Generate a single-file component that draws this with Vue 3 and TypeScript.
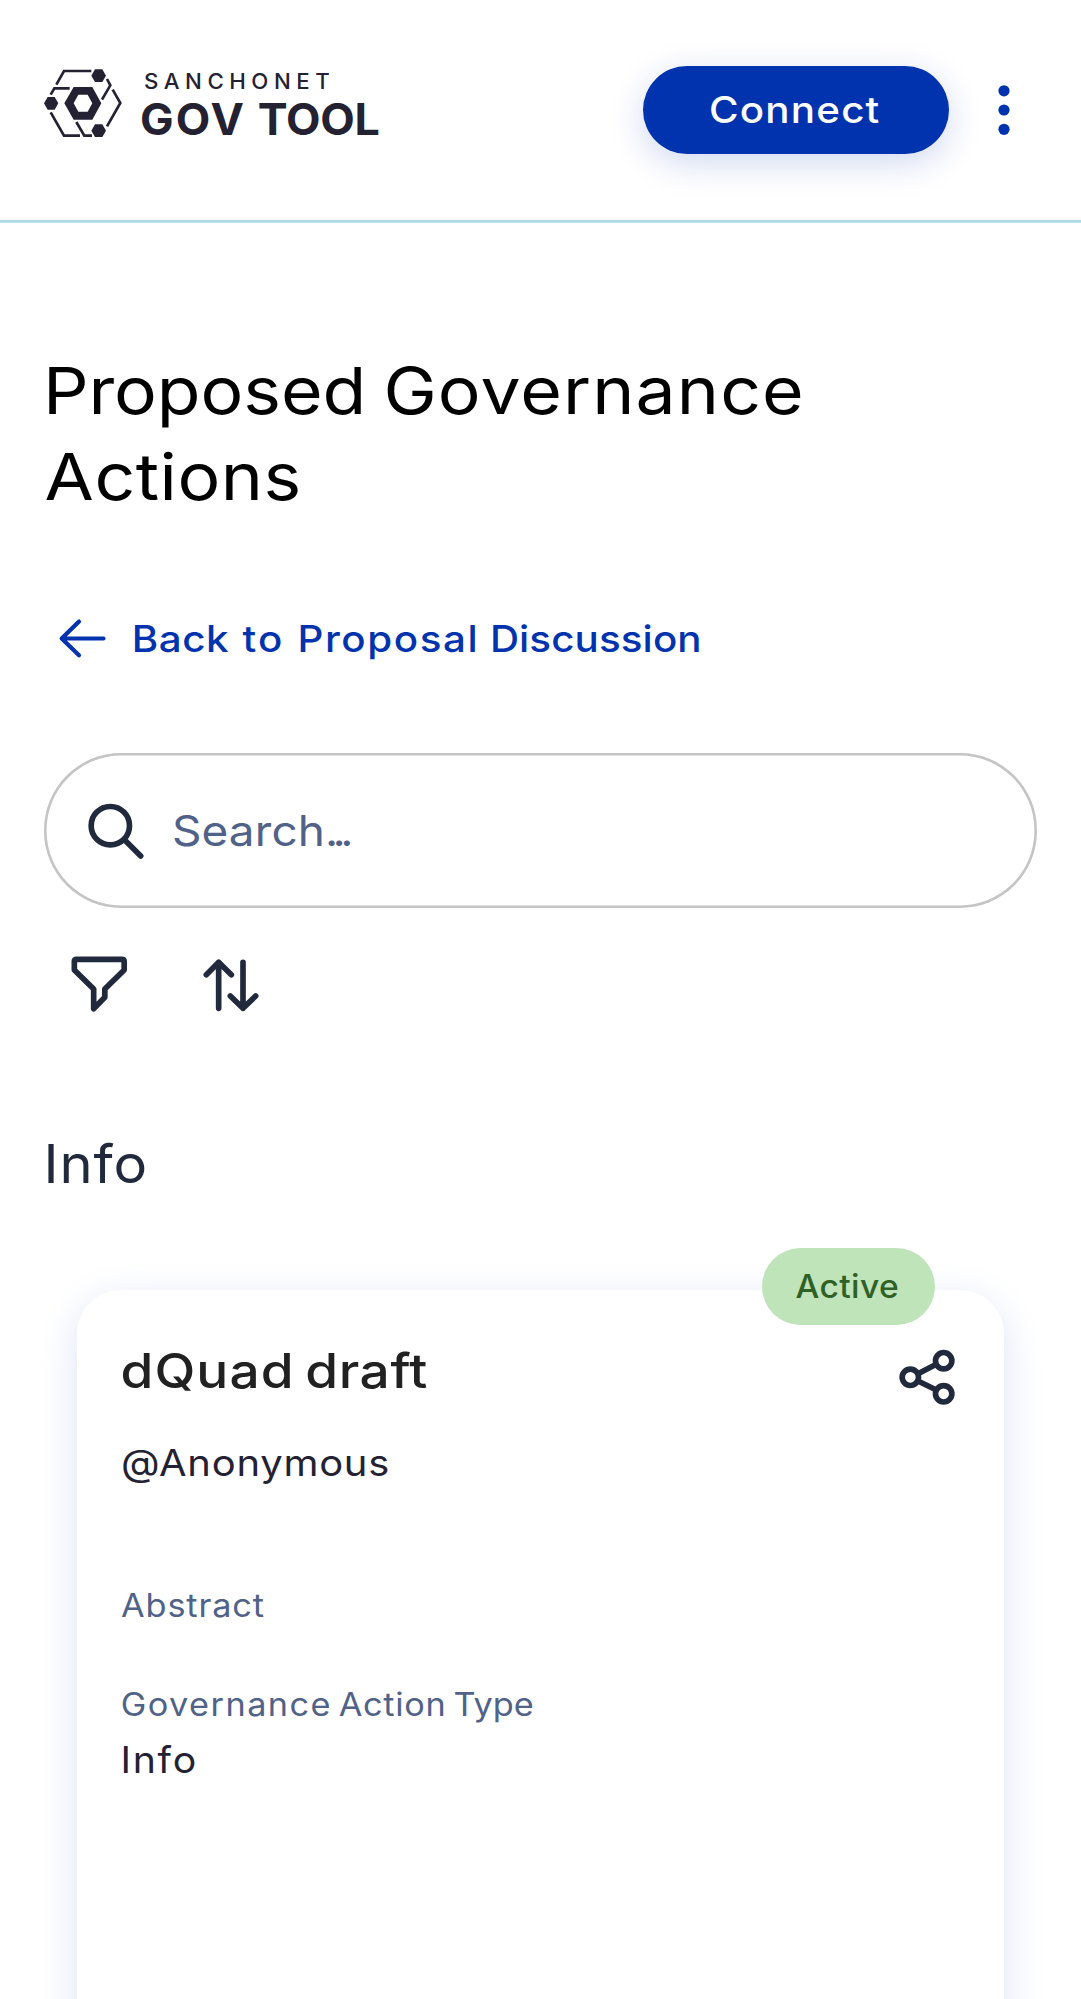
<script setup lang="ts">
import { h, type FunctionalComponent } from 'vue'

interface Word {
  text: string
  track: number
  gap?: number
}

// A line of words, each with its own tracking and leading gap in pixels;
// `wide` stretches the letterforms horizontally.
const Words: FunctionalComponent<{ words: Word[]; wide: number }> = (props) =>
  h(
    'span',
    {
      style: {
        display: 'inline-block',
        whiteSpace: 'nowrap',
        transformOrigin: '0 50%',
        transform: `scaleX(${props.wide})`,
      },
    },
    props.words.map((w) =>
      h('span', { style: { letterSpacing: `${w.track}px`, marginLeft: `${w.gap ?? 0}px` } }, w.text),
    ),
  )
Words.props = ['words', 'wide']

const brandTop: Word[] = [{ text: 'SANCHONET', track: 5.2 }]
const brandMain: Word[] = [
  { text: 'GOV', track: 2 },
  { text: 'TOOL', track: -0.3, gap: 11.5 },
]
const connect: Word[] = [{ text: 'Connect', track: 1.1 }]
const headingFirst: Word[] = [
  { text: 'Proposed', track: -0.1, gap: -1 },
  { text: 'Governance', track: 1, gap: 15.7 },
]
const headingSecond: Word[] = [{ text: 'Actions', track: 0.45, gap: 0.5 }]
const back: Word[] = [
  { text: 'Back', track: 0.5, gap: -1.2 },
  { text: 'to', track: 1.8, gap: 12.4 },
  { text: 'Proposal', track: 1.45, gap: 12.1 },
  { text: 'Discussion', track: 0.1, gap: 9.8 },
]
const search: Word[] = [
  { text: 'Search', track: 0.1 },
  { text: '...', track: -5.2 },
]
const section: Word[] = [{ text: 'Info', track: 0.8, gap: -0.5 }]

const card = {
  status: [{ text: 'Active', track: 0.4, gap: -0.5 }] as Word[],
  title: [
    { text: 'dQuad', track: 0.95, gap: -0.5 },
    { text: 'draft', track: 0.5, gap: 9.5 },
  ] as Word[],
  author: [{ text: '@Anonymous', track: 0.7 }] as Word[],
  abstractLabel: [{ text: 'Abstract', track: 0.84 }] as Word[],
  typeLabel: [
    { text: 'Governance', track: 1.38, gap: -0.3 },
    { text: 'Action', track: 0.67, gap: 6.2 },
    { text: 'Type', track: 0, gap: 6.7 },
  ] as Word[],
  type: [{ text: 'Info', track: 1.6, gap: -0.5 }] as Word[],
}
</script>

<template>
  <div class="page">
    <header class="header">
      <div class="brand">
        <svg class="mark" viewBox="42 54 236 210" aria-hidden="true">
          <g fill="none" stroke="#242232" stroke-width="8">
            <path d="M79 104 102 63H184" />
            <path d="M231 87 241 106 216 149" />
            <path d="M248 119 271 159 231 229" />
            <path d="M62 134 73 115H119" />
            <path d="M62 187 102 257H150" />
            <path d="M139 216 163 257H186" />
          </g>
          <g fill="#242232">
            <path d="M184 77 195 58H217L228 77 217 96H195Z" />
            <path d="M42 160 53 141H74L85 160 74 179H53Z" />
            <path d="M184 242 195 223H217L228 242 217 261H195Z" />
            <path
              fill-rule="evenodd"
              d="M103 160 131 111H187L214 160 187 209H131ZM131 160 145 185H173L187 160 173 134H145Z"
            />
          </g>
        </svg>
        <div class="brand-text">
          <div class="brand-top"><Words :words="brandTop" :wide="1.06" /></div>
          <div class="brand-main"><Words :words="brandMain" :wide="1.03" /></div>
        </div>
      </div>
      <button class="connect" type="button"><Words :words="connect" :wide="1.09" /></button>
      <svg class="menu" viewBox="0 0 66 88" fill="#0033ad" aria-hidden="true">
        <circle cx="33" cy="24.8" r="5.6" />
        <circle cx="33" cy="44" r="5.6" />
        <circle cx="33" cy="63.3" r="5.6" />
      </svg>
    </header>
    <div class="rule"></div>

    <main class="main">
      <h1 class="heading">
        <div><Words :words="headingFirst" :wide="1.1" /></div>
        <div><Words :words="headingSecond" :wide="1.1" /></div>
      </h1>

      <a class="back">
        <svg viewBox="55 610.4 55 55" fill="none" stroke="#0033ad" stroke-width="4.2" stroke-linecap="round" stroke-linejoin="round" aria-hidden="true">
          <path d="M103.5 637.9H61.7M79 621 61.7 637.9 79 654.7" />
        </svg>
        <Words :words="back" :wide="1.09" />
      </a>

      <div class="search">
        <svg class="icon" viewBox="158 172 198 198" aria-hidden="true">
          <circle cx="240" cy="255" r="57.5" />
          <path d="M283 298 331 346" />
        </svg>
        <Words :words="search" :wide="1.08" />
      </div>

      <div class="tools">
        <svg class="icon" viewBox="107 634 198 198" aria-hidden="true">
          <path d="M139 659H275Q281.500 659 281.500 665.500V691L223.500 748V773L190 807V748L132 691V665.500Q132 659 139 659Z" />
        </svg>
        <svg class="icon" viewBox="504 634 198 198" aria-hidden="true">
          <path d="M566 806V668M529 705 566 668 604 705M639 668V806M601 769 639 806 677 769" />
        </svg>
      </div>

      <h2 class="section"><Words :words="section" :wide="1.06" /></h2>

      <article class="card">
        <div class="badge"><Words :words="card.status" :wide="1.05" /></div>
        <div class="card-head">
          <div class="title"><Words :words="card.title" :wide="1.12" /></div>
          <svg class="icon" viewBox="461 343 198 198" aria-hidden="true">
            <circle cx="510" cy="443" r="24.500" />
            <circle cx="610" cy="393" r="24.500" />
            <circle cx="610" cy="492.500" r="24.500" />
            <path d="M533 432 588 404M533 454 588 481" stroke-linecap="butt" />
          </svg>
        </div>
        <div class="author"><Words :words="card.author" :wide="1.08" /></div>
        <div class="label abstract"><Words :words="card.abstractLabel" :wide="1.07" /></div>
        <div class="label type-label"><Words :words="card.typeLabel" :wide="1.07" /></div>
        <div class="value"><Words :words="card.type" :wide="1.06" /></div>
      </article>
    </main>
  </div>
</template>

<style scoped>
.page {
  box-sizing: border-box;
  height: 1999px;
  overflow: hidden;
  background: #fff;
  font-family: Inter, 'Liberation Sans', sans-serif;
}
.page svg {
  display: block;
  flex: none;
}
.header {
  display: flex;
  align-items: flex-start;
  box-sizing: border-box;
  height: 220px;
  padding: 66px 44.5px 0 44px;
}
.brand {
  display: flex;
  margin-top: 2px;
}
.mark {
  width: 78.67px;
  height: 70px;
}
.brand-text {
  margin-left: 17.5px;
  color: #242232;
}
.brand-top {
  padding-left: 3.5px;
  font-size: 21px;
  font-weight: 500;
  line-height: 27px;
}
.brand-main {
  font-size: 43.5px;
  font-weight: 700;
  line-height: 48px;
}
.connect {
  width: 305.4px;
  height: 88px;
  margin-left: auto;
  padding: 0 0 0 65.5px;
  border: 0;
  border-radius: 44px;
  background: #0033ad;
  box-shadow: 0 9px 34px rgba(0, 51, 173, 0.19);
  color: #fff;
  font: 500 37px/88px Inter, 'Liberation Sans', sans-serif;
  text-align: left;
}
.menu {
  width: 66px;
  height: 88px;
  margin-left: 21.8px;
}
.rule {
  height: 3px;
  background: linear-gradient(#add8e6 2px, #c1e2ec 2px);
}
.main {
  padding: 125.4px 44px 0;
}
.heading {
  margin: 0;
  color: #000;
  font-size: 65px;
  font-weight: 400;
  line-height: 86px;
}
.back {
  display: flex;
  align-items: center;
  gap: 22.7px;
  height: 55px;
  margin: 90.6px 0 0 11px;
  color: #0033ad;
  font-size: 37px;
  font-weight: 500;
}
.back svg {
  width: 55px;
  height: 55px;
}
.search {
  display: flex;
  align-items: center;
  gap: 23px;
  box-sizing: border-box;
  height: 154.2px;
  margin-top: 87.5px;
  padding-left: 38.5px;
  border-radius: 77.1px;
  box-shadow: inset 0 0 0 2.6px #c4c4c4;
  color: #506288;
  font-size: 42.5px;
}
.icon {
  width: 66px;
  height: 66px;
  fill: none;
  stroke: #212a3d;
  stroke-width: 17;
  stroke-linecap: round;
  stroke-linejoin: round;
}
.tools {
  display: flex;
  gap: 66.3px;
  margin: 43.7px 0 0 21.7px;
}
.section {
  margin: 113.2px 0 0;
  color: #212a3d;
  font-size: 53px;
  font-weight: 400;
  line-height: 66px;
}
.card {
  position: relative;
  box-sizing: border-box;
  height: 860px;
  margin: 93px 33px 0;
  padding: 54.3px 44.5px 0 44px;
  border-radius: 44px;
  background: #fff;
  box-shadow: 0 11px 41px #dde3f5;
}
.badge {
  position: absolute;
  top: -41.7px;
  left: 685px;
  box-sizing: border-box;
  width: 173px;
  height: 77.4px;
  padding-left: 34px;
  border-radius: 38.7px;
  background: #c0e4ba;
  color: #2f6126;
  font-size: 32px;
  font-weight: 500;
  line-height: 77px;
}
.card-head {
  display: flex;
  justify-content: space-between;
  height: 66px;
}
.title {
  color: #212121;
  font-size: 47.5px;
  font-weight: 500;
  line-height: 54px;
}
.author,
.value {
  color: #242232;
  font-size: 37px;
  line-height: 44px;
}
.author {
  margin-top: 31.2px;
}
.label {
  color: #506288;
  font-size: 32px;
  line-height: 40px;
}
.abstract {
  margin-top: 100.6px;
}
.type-label {
  margin-top: 59px;
}
.value {
  margin-top: 13.4px;
}
</style>

<style>
body {
  margin: 0;
  background: #fff;
}
</style>
